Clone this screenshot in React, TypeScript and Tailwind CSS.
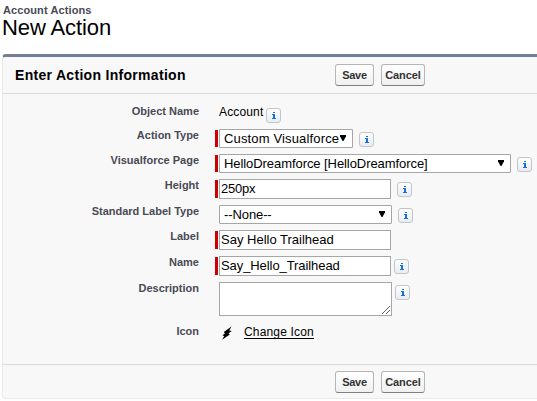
import React from 'react';

function Info({ className = '' }: { className?: string }) {
  return (
    <span className={`flex h-[15px] w-[15px] shrink-0 items-center justify-center rounded-[3px] border border-[#c3c5c9] bg-gradient-to-b from-[#fdfdfd] to-[#e8edf4] ${className}`}>
      <svg width="5" height="9" viewBox="0 0 5 9" shapeRendering="crispEdges" fill="#1a70d2">
        <path d="M2 1h2v1H2zM1 3h3v4h1v1H1v-1h1v-3H1z" />
      </svg>
    </span>
  );
}

function Row({ label, height, required, children }: { label: string; height: string; required?: string; children: React.ReactNode }) {
  return (
    <div className={`flex items-start ${height}`}>
      <div className="w-[196px] shrink-0 text-right text-[11px] leading-[13px] font-bold whitespace-nowrap text-[#4a4a56]">{label}</div>
      <div className={`mt-px mr-px ml-4 w-[3px] shrink-0 ${required ? `bg-[#c00] ${required}` : ''}`} />
      {children}
    </div>
  );
}

function Select({ text, width, spacing, arrow }: { text: string; width: string; spacing: string; arrow: string }) {
  return (
    <div className={`flex h-[19px] shrink-0 items-center justify-between rounded-[1px] border border-[#a6a6a6] bg-white pl-1 ${arrow} ${width}`}>
      <span className={`text-[13px] leading-[17px] whitespace-nowrap ${spacing}`}>{text}</span>
      <svg width="6" height="7" viewBox="0 0 6 7" className="shrink-0"><path d="M0 0h6v1.2L3.5 6h-1L0 1.2z" /></svg>
    </div>
  );
}

function Input({ text, spacing }: { text: string; spacing: string }) {
  return (
    <div className={`h-5 w-[172px] shrink-0 border border-[#a6a6a6] bg-white pl-px text-[13px] leading-[18px] whitespace-nowrap ${spacing}`}>{text}</div>
  );
}

function Buttons() {
  return (
    <div className="flex gap-[7px] text-[11px] font-bold text-[#333]">
      <button className="h-[22px] w-[39px] rounded-[3px] border border-[#b5b5b5] border-b-[#7f7f7f] bg-gradient-to-b from-white to-[#f0f0f0] leading-[19px] tracking-[-0.3px]">Save</button>
      <button className="h-[22px] w-11 rounded-[3px] border border-[#b5b5b5] border-b-[#7f7f7f] bg-gradient-to-b from-white to-[#f0f0f0] leading-[19px] tracking-[-0.1px]">Cancel</button>
    </div>
  );
}

export default function App() {
  return (
    <main className="h-[401px] w-[537px] overflow-hidden bg-white pl-[2px] font-['Liberation_Sans',Arial,sans-serif] text-black">
      <header className="h-[54px] pt-1">
        <div className="pl-px text-[11px] leading-3 font-bold tracking-[0.1px] text-[#4a4a56]">Account Actions</div>
        <h1 className="text-[22px] leading-[24px] tracking-[-0.1px]">New Action</h1>
      </header>
      <section className="h-[345px] w-[540px] rounded-[4px] border border-t-[3px] border-[#eaeaea] border-t-[#747e96] bg-[#f8f8f8]">
        <div className="flex h-[37px] items-start border-b border-[#dbdbdb] pt-[7px] pl-3">
          <h2 className="w-[320px] pt-px text-[14px] leading-[20px] font-bold tracking-[0.3px] whitespace-nowrap">Enter Action Information</h2>
          <Buttons />
        </div>
        <div className="h-[271px] border-b border-[#dbdbdb] pt-[11px]">
          <Row label="Object Name" height="h-[24px]">
            <span className="w-[47px] text-[12px] leading-[14px] tracking-[0.15px]">Account</span>
            <Info className="mt-[3px]" />
          </Row>
          <Row label="Action Type" height="h-[25px]" required="h-[17px]">
            <Select text="Custom Visualforce" width="w-[134px]" spacing="tracking-[0.15px]" arrow="pr-[6px]" />
            <Info className="mt-[3px] ml-1.5" />
          </Row>
          <Row label="Visualforce Page" height="h-[25px]" required="h-[17px]">
            <Select text="HelloDreamforce [HelloDreamforce]" width="w-[292px]" spacing="tracking-[-0.07px]" arrow="pr-[6px]" />
            <Info className="mt-[3px] ml-1.5" />
          </Row>
          <Row label="Height" height="h-[26px]" required="h-[18px]">
            <Input text="250px" spacing="tracking-[-0.2px]" />
            <Info className="mt-[3px] ml-1.5" />
          </Row>
          <Row label="Standard Label Type" height="h-[25px]">
            <Select text="--None--" width="w-[173px]" spacing="tracking-[-0.1px]" arrow="pr-[6px]" />
            <Info className="mt-[3px] ml-1.5" />
          </Row>
          <Row label="Label" height="h-[26px]" required="h-[18px]">
            <Input text="Say Hello Trailhead" spacing="tracking-normal" />
          </Row>
          <Row label="Name" height="h-[26px]" required="h-[18px]">
            <Input text="Say_Hello_Trailhead" spacing="tracking-[-0.08px]" />
            <Info className="mt-[3px] ml-[3px]" />
          </Row>
          <Row label="Description" height="h-[43px]">
            <div className="flex h-[34px] w-[173px] shrink-0 items-end justify-end border border-[#a6a6a6] bg-white p-px">
              <svg width="8" height="8" viewBox="0 0 8 8" fill="none" stroke="#666"><path d="M0 8L8 0M4 8l4-4" /></svg>
            </div>
            <Info className="mt-[3px] ml-[3px]" />
          </Row>
          <Row label="Icon" height="h-[20px]">
            <svg width="12" height="15" viewBox="0 0 12 15" className="mt-px ml-[2px] shrink-0"><path d="M10.5 0.5L2.8 6 4 7.5 1.3 9.2 3.2 10 1.2 13.8 8.8 8.6 7.6 7.3 10.8 5 8.2 4.6z" /></svg>
            <a className="ml-[11px] text-[12px] leading-[14px] tracking-[0.17px] underline underline-offset-2">Change Icon</a>
          </Row>
        </div>
        <div className="flex h-[33px] items-start pt-[6px] pl-[332px]"><Buttons /></div>
      </section>
    </main>
  );
}
